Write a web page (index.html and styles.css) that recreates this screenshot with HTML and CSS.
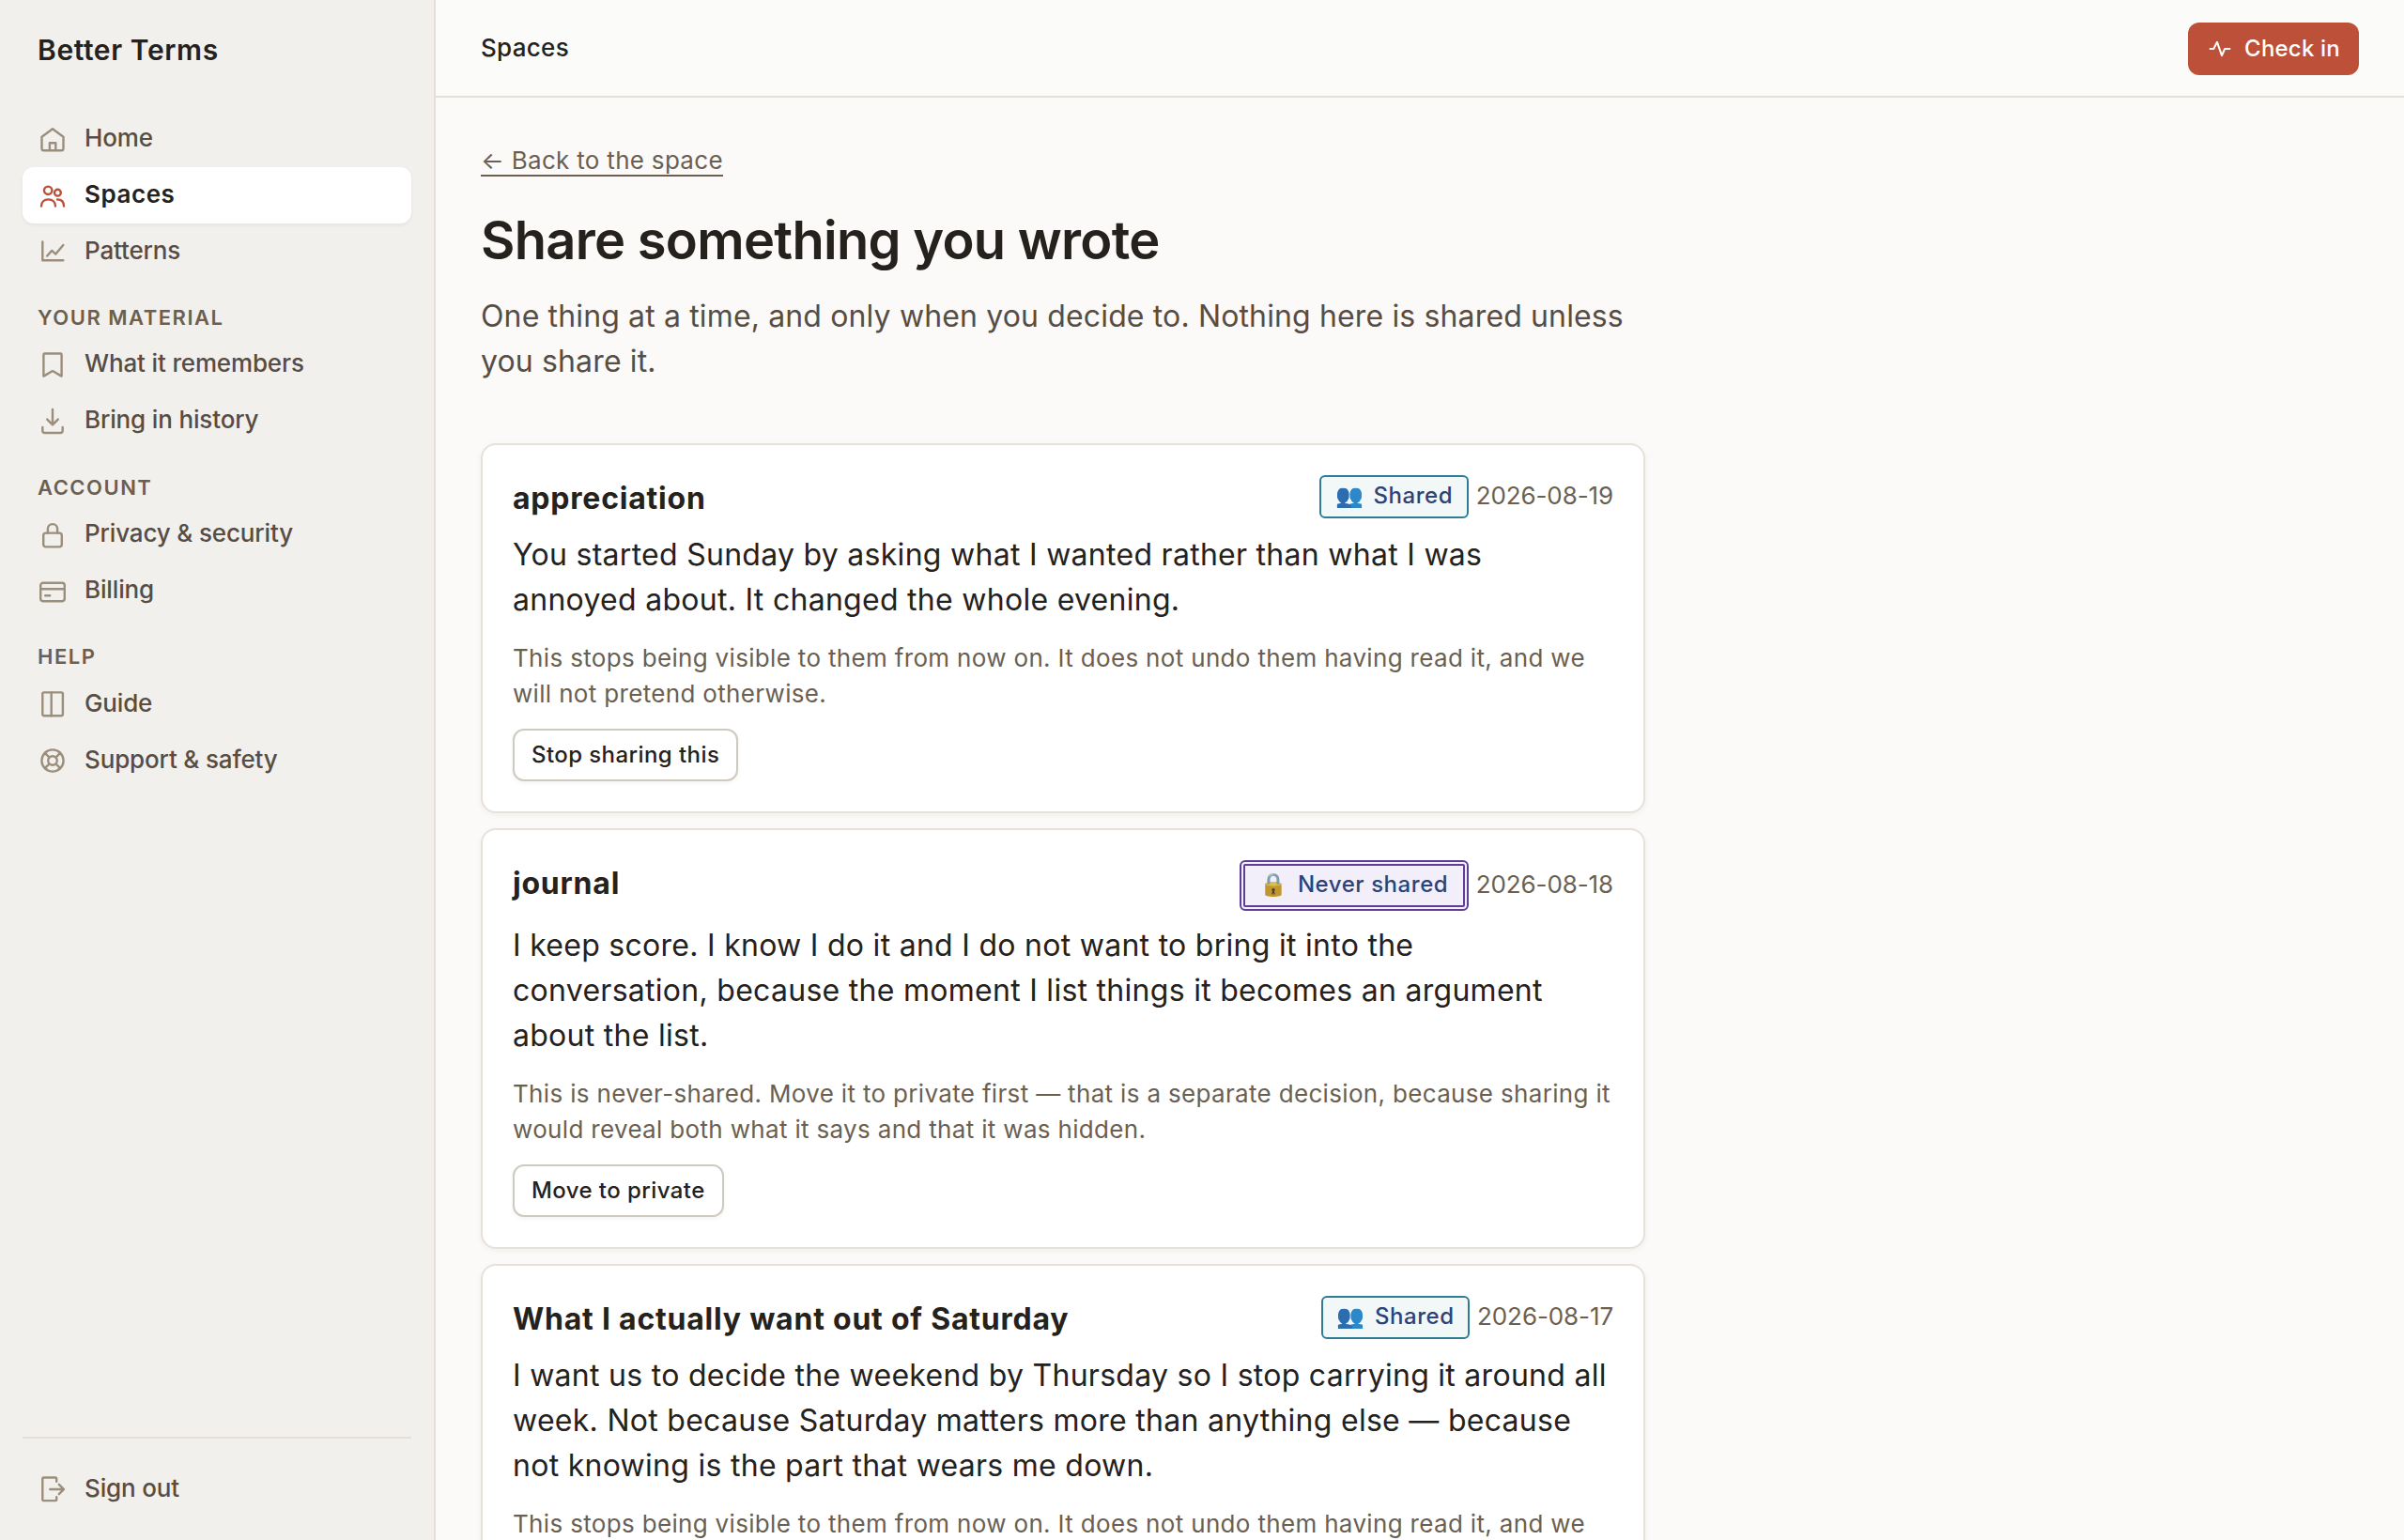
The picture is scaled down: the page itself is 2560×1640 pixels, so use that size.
FILE: index.html
```html
<!DOCTYPE html>
<html lang="en">
<head>
  <meta charset="UTF-8" />
  <meta name="viewport" content="width=device-width, initial-scale=1.0" />
  <title>Share something you wrote — Better Terms</title>
  <link rel="stylesheet" href="styles.css">
</head>
<body>
  <div class="app">
    <aside class="sidebar">
      <a class="brand" href="#">Better Terms</a>

      <nav class="nav">
        <a class="nav-item" href="#">
          <svg class="icon" viewBox="0 0 32 32"><path d="M4.5 13.8 16 5.3l11.5 8.5V26a2.3 2.3 0 0 1-2.3 2.3H6.8A2.3 2.3 0 0 1 4.5 26zM12.9 28.3v-8h6.4v8"/></svg>
          <span>Home</span>
        </a>
        <a class="nav-item active" href="#">
          <svg class="icon" viewBox="0 0 32 32"><circle cx="11.2" cy="10.8" r="4.2"/><circle cx="21.4" cy="13.2" r="3.4"/><path d="M4 27.6c0-4.6 3-7.2 7.5-7.2s7.5 2.6 7.5 7.2M21 20.4c4.4 0 7 2.6 7 7.2"/></svg>
          <span>Spaces</span>
        </a>
        <a class="nav-item" href="#">
          <svg class="icon" viewBox="0 0 32 32"><path d="M5.3 5.5v19.8h22M10.2 20.5l5-5.6 4.1 3.7 8-9.6"/></svg>
          <span>Patterns</span>
        </a>

        <div class="nav-label">Your material</div>
        <a class="nav-item" href="#">
          <svg class="icon" viewBox="0 0 32 32"><path d="M6.4 27.6V4.8a1.3 1.3 0 0 1 1.3-1.3h16.6a1.3 1.3 0 0 1 1.3 1.3v22.8L16 22z"/></svg>
          <span>What it remembers</span>
        </a>
        <a class="nav-item" href="#">
          <svg class="icon" viewBox="0 0 32 32"><path d="M16 3v16M10.2 13.6l5.8 5.8 5.8-5.8M5.3 22v3.8A2.3 2.3 0 0 0 7.6 28h16.8a2.3 2.3 0 0 0 2.3-2.2V22"/></svg>
          <span>Bring in history</span>
        </a>

        <div class="nav-label">Account</div>
        <a class="nav-item" href="#">
          <svg class="icon" viewBox="0 0 32 32"><rect x="6.2" y="13.6" width="19.6" height="14.8" rx="2.6"/><path d="M10.9 13.6V9.2a5.1 5.1 0 0 1 10.2 0v4.4"/></svg>
          <span>Privacy &amp; security</span>
        </a>
        <a class="nav-item" href="#">
          <svg class="icon" viewBox="0 0 32 32"><rect x="3.2" y="6.8" width="25.6" height="19.4" rx="2.6"/><path d="M3.2 13.2h25.6M8.2 20.2h5"/></svg>
          <span>Billing</span>
        </a>

        <div class="nav-label">Help</div>
        <a class="nav-item" href="#">
          <svg class="icon" viewBox="0 0 32 32"><rect x="5.3" y="3.4" width="21.6" height="24.8" rx="1.6"/><path d="M14.7 3.4v24.8"/></svg>
          <span>Guide</span>
        </a>
        <a class="nav-item" href="#">
          <svg class="icon" viewBox="0 0 32 32"><circle cx="16" cy="16" r="11.6"/><circle cx="16" cy="16" r="4.8"/><path d="M7.8 7.8l4.8 4.8M19.4 19.4l4.8 4.8M24.2 7.8l-4.8 4.8M12.6 19.4l-4.8 4.8"/></svg>
          <span>Support &amp; safety</span>
        </a>
      </nav>

      <div class="sidebar-foot">
        <a class="nav-item" href="#">
          <svg class="icon" viewBox="0 0 32 32"><path d="M20.2 7.8V4.8a1.3 1.3 0 0 0-1.3-1.3H6.6a1.3 1.3 0 0 0-1.3 1.3v22a1.3 1.3 0 0 0 1.3 1.3h12.3a1.3 1.3 0 0 0 1.3-1.3v-2.6M13.3 16H28M22.8 10.8 28 16l-5.2 5.2"/></svg>
          <span>Sign out</span>
        </a>
      </div>
    </aside>

    <div class="page">
      <header class="topbar">
        <span class="topbar-title">Spaces</span>
        <a class="checkin" href="#">
          <svg class="pulse" viewBox="0 0 28 28"><path d="M2.8 14h4.5L11 6.8l5 14.4 3.2-7.2h6"/></svg>
          <span>Check in</span>
        </a>
      </header>

      <main class="content">
        <a class="back" href="#">← Back to the space</a>
        <h1>Share something you wrote</h1>
        <p class="lead">One thing at a time, and only when you decide to. Nothing here is shared unless you share it.</p>

        <div class="cards">
          <article class="card">
            <div class="card-head">
              <h2>appreciation</h2>
              <div class="meta">
                <span class="badge shared"><span class="emoji">👥</span>Shared</span>
                <time>2026-08-19</time>
              </div>
            </div>
            <p class="text">You started Sunday by asking what I wanted rather than what I was annoyed about. It changed the whole evening.</p>
            <p class="note">This stops being visible to them from now on. It does not undo them having read it, and we will not pretend otherwise.</p>
            <button class="btn" type="button">Stop sharing this</button>
          </article>

          <article class="card">
            <div class="card-head">
              <h2>journal</h2>
              <div class="meta">
                <span class="badge never"><span class="emoji">🔒</span>Never shared</span>
                <time>2026-08-18</time>
              </div>
            </div>
            <p class="text">I keep score. I know I do it and I do not want to bring it into the conversation, because the moment I list things it becomes an argument about the list.</p>
            <p class="note">This is never-shared. Move it to private first — that is a separate decision, because sharing it would reveal both what it says and that it was hidden.</p>
            <button class="btn" type="button">Move to private</button>
          </article>

          <article class="card">
            <div class="card-head">
              <h2>What I actually want out of Saturday</h2>
              <div class="meta">
                <span class="badge shared"><span class="emoji">👥</span>Shared</span>
                <time>2026-08-17</time>
              </div>
            </div>
            <p class="text">I want us to decide the weekend by Thursday so I stop carrying it around all week. Not because Saturday matters more than anything else — because not knowing is the part that wears me down.</p>
            <p class="note">This stops being visible to them from now on. It does not undo them having read it, and we will not pretend otherwise.</p>
            <button class="btn" type="button">Stop sharing this</button>
          </article>
        </div>
      </main>
    </div>
  </div>
</body>
</html>
```
FILE: styles.css
```css
* {
  box-sizing: border-box;
}

body {
  margin: 0;
  font-family: Inter, sans-serif;
  font-size: 32px;
  line-height: 48px;
  color: #25211c;
  background: #fbfaf8;
}

a {
  color: inherit;
  text-decoration: none;
}

h1,
h2,
p {
  margin: 0;
}

.app {
  display: flex;
  height: 100vh;
  overflow: hidden;
}

/* sidebar */

.sidebar {
  width: 464px;
  flex-shrink: 0;
  display: flex;
  flex-direction: column;
  padding: 24px;
  background: #f1f0ec;
  border-right: 2px solid #e6dfd9;
}

.brand {
  padding: 5px 16px 41px;
  font-size: 30px;
  font-weight: 600;
  letter-spacing: 0.6px;
}

.nav-item {
  display: flex;
  align-items: center;
  gap: 18px;
  height: 60px;
  padding: 0 16px;
  border-radius: 12px;
  font-size: 26px;
  font-weight: 500;
  letter-spacing: -0.15px;
  color: #574d44;
}

.nav-item span {
  padding-bottom: 3px;
}

.nav-item.active {
  background: #fff;
  color: #25211c;
  font-weight: 600;
  letter-spacing: 0.55px;
  box-shadow: 0 2px 4px rgba(40, 30, 20, 0.06);
}

.icon {
  width: 32px;
  height: 32px;
  flex-shrink: 0;
  fill: none;
  stroke: #9c8e7c;
  stroke-width: 2.4;
  stroke-linecap: round;
  stroke-linejoin: round;
}

.active .icon {
  stroke: #bd5036;
}

.nav-label {
  height: 60.8px;
  padding: 23.8px 16px 0;
  font-size: 22px;
  line-height: 32px;
  font-weight: 600;
  letter-spacing: 1.5px;
  text-transform: uppercase;
  color: #6b5f51;
}

.sidebar-foot {
  margin-top: auto;
  padding-top: 24px;
  border-top: 2px solid #e6dfd9;
}

/* top bar */

.page {
  flex: 1;
  min-width: 0;
}

.topbar {
  display: flex;
  align-items: center;
  justify-content: space-between;
  height: 104px;
  padding: 0 48px;
  background: #fbfbf9;
  border-bottom: 2px solid #e2e0d9;
}

.topbar-title {
  font-size: 26px;
  font-weight: 500;
  letter-spacing: 0.3px;
}

.checkin {
  display: flex;
  align-items: center;
  gap: 12px;
  height: 56px;
  margin-top: 2px;
  padding: 0 20px;
  border-radius: 12px;
  background: #bd5038;
  color: #fff;
  font-size: 24px;
  font-weight: 500;
  letter-spacing: 0.2px;
}

.pulse {
  width: 28px;
  height: 28px;
  fill: none;
  stroke: #fff;
  stroke-width: 2;
  stroke-linejoin: round;
}

/* content */

.content {
  width: 1336px;
  padding: 48px;
}

.back {
  display: block;
  width: fit-content;
  height: 36px;
  line-height: 37px;
  font-size: 26px;
  letter-spacing: 0.3px;
  color: #6b5f51;
  border-bottom: 2px solid #6b5f51;
}

h1 {
  margin-top: 34px;
  font-size: 56px;
  line-height: 68px;
  font-weight: 600;
  letter-spacing: -0.72px;
}

.lead {
  margin: 23px 0 63px;
  letter-spacing: 0.14px;
  color: #574d44;
}

.cards {
  display: grid;
  gap: 16px;
}

.card {
  padding: 32px;
  background: #fff;
  border: 2px solid #e6e1da;
  border-radius: 16px;
  box-shadow: 0 2px 6px rgba(40, 30, 20, 0.05);
}

.card-head {
  display: flex;
  align-items: flex-start;
  justify-content: space-between;
  margin-bottom: 13px;
}

.card-head h2 {
  height: 48px;
  font-size: 32px;
  line-height: 50px;
  font-weight: 700;
  letter-spacing: 0.78px;
}

.meta {
  display: flex;
  align-items: center;
  gap: 8px;
}

.meta time {
  padding-bottom: 3px;
  font-size: 26px;
  line-height: 38px;
  letter-spacing: -0.1px;
  color: #6b5f51;
}

.badge {
  display: flex;
  align-items: center;
  height: 46px;
  padding: 0 14.5px 2px;
  border-radius: 6px;
  font-size: 24px;
  font-weight: 500;
  letter-spacing: 0.55px;
  color: #2b4478;
}

.badge.shared {
  background: #f2f7f8;
  border: 2px solid #2f7d95;
}

.badge.never {
  height: 54px;
  padding: 0 15.5px 2px;
  background: #f2effa;
  border: 6px double #5f3f96;
}

.emoji {
  margin-right: 10px;
  opacity: 0.95;
  filter: saturate(0.85) brightness(0.88);
}

.text {
  letter-spacing: 0.28px;
}

.note {
  margin: 19px 0 18px;
  font-size: 26px;
  line-height: 38px;
  letter-spacing: 0.33px;
  color: #6b5f51;
}

.btn {
  display: block;
  height: 56px;
  padding: 0 18px 2px;
  border: 2px solid #cfcac0;
  border-radius: 12px;
  background: #fff;
  color: #25211c;
  font-family: inherit;
  font-size: 24px;
  font-weight: 500;
  letter-spacing: 0.42px;
  box-shadow: 0 2px 4px rgba(40, 30, 20, 0.05);
}
```
